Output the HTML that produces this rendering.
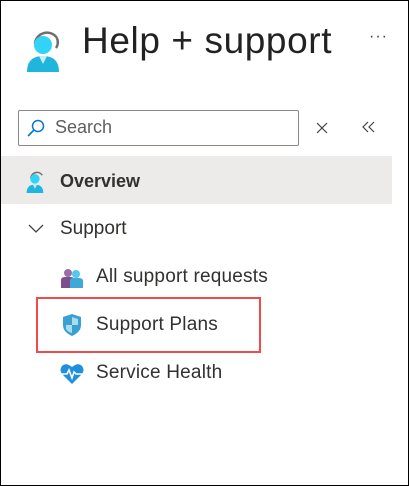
<!DOCTYPE html>
<html><head><style>
body{margin:0;width:409px;height:486px;overflow:hidden;background:#fff;font-family:"Liberation Sans",sans-serif;}
.frame{position:absolute;left:0;top:0;width:407px;height:484px;border:1px solid #000;}
.t{position:absolute;color:#323130;white-space:nowrap;}
</style></head><body>
<div class="frame"></div>
<svg style="position:absolute;left:25px;top:28px" width="40" height="46" viewBox="0 0 40 46">
<path d="M10 16 A12 12 0 0 1 32 10" stroke="#6e6e6e" stroke-width="2.5" fill="none"/>
<path d="M32 10 Q34 16 31 20" stroke="#6e6e6e" stroke-width="2.5" fill="none"/>
<circle cx="18" cy="17" r="9" fill="#32d4f5"/>
<path d="M2 44 Q2 28 18 28 Q34 28 34 44 Z" fill="#1fb5dc"/>
<path d="M14 28 L18 36 L22 28 Z" fill="#c7eef8"/>
</svg>
<div class="t" style="left:82px;top:20px;font-size:37px;color:#222;letter-spacing:0.6px">Help + support</div>
<div class="t" style="left:369px;top:28px;font-size:16px;color:#444;letter-spacing:1px">···</div>
<div style="position:absolute;left:18px;top:110px;width:279px;height:34px;border:1px solid #8a8886;border-radius:2px"></div>
<svg style="position:absolute;left:26px;top:118px" width="20" height="20" viewBox="0 0 20 20">
<circle cx="12" cy="8" r="5.5" stroke="#0078d4" stroke-width="1.5" fill="none"/>
<path d="M8 12 L2 18" stroke="#0078d4" stroke-width="1.6"/>
</svg>
<div class="t" style="left:55px;top:117px;font-size:18px;color:#605e5c">Search</div>
<svg style="position:absolute;left:316px;top:122px" width="12" height="12"><path d="M1 1L11 11M11 1L1 11" stroke="#444" stroke-width="1.2"/></svg>
<svg style="position:absolute;left:362px;top:121px" width="14" height="12"><path d="M6 1L1 6L6 11M12 1L7 6L12 11" stroke="#444" stroke-width="1.2" fill="none"/></svg>
<div style="position:absolute;left:1px;top:156px;width:391px;height:48px;background:#edebe9"></div>
<svg style="position:absolute;left:25px;top:170px" width="22" height="24" viewBox="0 0 40 46">
<path d="M10 16 A12 12 0 0 1 32 10" stroke="#6e6e6e" stroke-width="3" fill="none"/>
<circle cx="18" cy="17" r="9" fill="#32d4f5"/>
<path d="M2 44 Q2 28 18 28 Q34 28 34 44 Z" fill="#1fb5dc"/>
<path d="M14 28 L18 36 L22 28 Z" fill="#c7eef8"/>
</svg>
<div class="t" style="left:60px;top:171px;font-size:18px;font-weight:bold;color:#323130">Overview</div>
<svg style="position:absolute;left:28px;top:224px" width="16" height="10"><path d="M1 1L8 8L15 1" stroke="#444" stroke-width="1.3" fill="none"/></svg>
<div class="t" style="left:60px;top:218px;font-size:19px">Support</div>
<svg style="position:absolute;left:61px;top:268px" width="22" height="20" viewBox="0 0 22 20">
<circle cx="7" cy="5" r="4" fill="#9b6fa5"/><path d="M0 20V12Q0 9 4 9H10Q13 9 13 12V20Z" fill="#7d4f8c"/>
<circle cx="15" cy="6" r="4" fill="#50c8f0"/><path d="M9 20V13Q9 10 12 10H18Q22 10 22 13V20Z" fill="#3ea9d8"/>
</svg>
<div class="t" style="left:96px;top:266px;font-size:19px;letter-spacing:0.2px">All support requests</div>
<div style="position:absolute;left:36px;top:297px;width:221px;height:52px;border:2px solid #f04a4a"></div>
<svg style="position:absolute;left:62px;top:313px" width="20" height="24" viewBox="0 0 20 24">
<path d="M10 1L19 4V12Q19 19 10 23Q1 19 1 12V4Z" fill="#3aa0d0"/>
<path d="M10 4L16 6V12H10ZM10 12H4V16Q6 19 10 20Z" fill="#a8dcf0"/>
</svg>
<div class="t" style="left:96px;top:314px;font-size:19px;letter-spacing:0.2px">Support Plans</div>
<svg style="position:absolute;left:60px;top:363px" width="24" height="22" viewBox="0 0 24 22">
<path d="M12 21L2 11Q-1 7 2 3Q6 -1 12 4Q18 -1 22 3Q25 7 22 11Z" fill="#1f8fe0"/>
<path d="M1 11H7L9 7L12 15L14 9L16 11H23" stroke="#fff" stroke-width="1.6" fill="none"/>
</svg>
<div class="t" style="left:96px;top:362px;font-size:19px;letter-spacing:0.2px">Service Health</div>
</body></html>
